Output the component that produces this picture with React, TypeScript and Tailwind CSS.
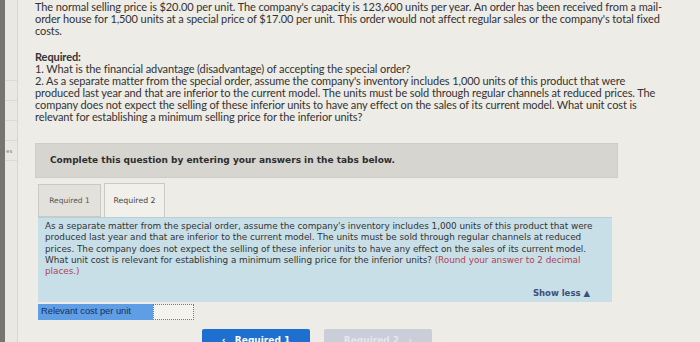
import React from 'react';

const topLines = [
  "The normal selling price is $20.00 per unit. The company's capacity is 123,600 units per year. An order has been received from a mail-",
  "order house for 1,500 units at a special price of $17.00 per unit. This order would not affect regular sales or the company's total fixed",
  "costs.",
];

const reqLines = [
  "1. What is the financial advantage (disadvantage) of accepting the special order?",
  "2. As a separate matter from the special order, assume the company's inventory includes 1,000 units of this product that were",
  "produced last year and that are inferior to the current model. The units must be sold through regular channels at reduced prices. The",
  "company does not expect the selling of these inferior units to have any effect on the sales of its current model. What unit cost is",
  "relevant for establishing a minimum selling price for the inferior units?",
];

const Sidebar = () => (
  <div className="flex w-[18px] shrink-0 h-full">
    <div className="w-[5px] bg-[#77756f]" />
    <div className="flex-1 bg-[#e9e8e2] border-r border-[#d8d6cf] pt-[80px]">
      <div className="h-[20px] border-t border-[#dcdad3]" />
      <div className="h-[20px] border-t border-[#dcdad3]" />
      <div className="h-[20px] border-t border-[#dcdad3]" />
      <div className="h-[20px] border-t border-[#dcdad3] text-[6px] text-[#8a8883] leading-[20px] pl-[1px]">es</div>
      <div className="border-t border-[#dcdad3]" />
    </div>
  </div>
);

export default function App() {
  return (
    <div className="w-[700px] h-[342px] overflow-hidden flex bg-[#edece6]">
      <Sidebar />
      <div className="flex-1 pl-[17px] pt-[1px] text-[#333]">
        <div className="text-[11px] leading-[12px] tracking-[-0.1px]" style={{ fontFamily: 'Lato, "Open Sans", sans-serif' }}>
          {topLines.map((l) => (
            <div key={l} className="whitespace-nowrap">{l}</div>
          ))}
          <div className="h-[14px]" />
          <div className="font-bold">Required:</div>
          {reqLines.map((l) => (
            <div key={l} className="whitespace-nowrap">{l}</div>
          ))}
        </div>

        <div
          className="mt-[20px] w-[583px] h-[35px] bg-[#d7d5d0] border border-[#cfcdc7] flex items-center pl-[14px]"
          style={{ fontFamily: '"DejaVu Sans", Verdana, sans-serif' }}
        >
          <span className="text-[9px] font-bold text-[#2e2e2e]">
            Complete this question by entering your answers in the tabs below.
          </span>
        </div>

        <div className="ml-[3px] mt-[6px] w-[574px]" style={{ fontFamily: '"DejaVu Sans", Verdana, sans-serif' }}>
          <div className="flex gap-[3px] h-[33px] items-end">
            <div className="w-[63px] h-[33px] bg-[#e3e1dc] border border-[#cbc9c3] flex items-center justify-center text-[7.5px] text-[#555]">
              Required 1
            </div>
            <div className="w-[61px] h-[34px] bg-[#f1f0eb] border border-b-0 border-[#cbc9c3] flex items-center justify-center text-[7.8px] text-[#444]">
              Required 2
            </div>
          </div>
          <div className="bg-[#c8dfe7] border-t border-[#b9cfd8] px-[7px] pt-[3px] pb-[2px] h-[85px] flex flex-col">
            <div className="text-[8.9px] leading-[11.3px] text-[#333] tracking-[-0.05px]">
              <div className="whitespace-nowrap">As a separate matter from the special order, assume the company's inventory includes 1,000 units of this product that were</div>
              <div className="whitespace-nowrap">produced last year and that are inferior to the current model. The units must be sold through regular channels at reduced</div>
              <div className="whitespace-nowrap">prices. The company does not expect the selling of these inferior units to have any effect on the sales of its current model.</div>
              <div className="whitespace-nowrap">
                What unit cost is relevant for establishing a minimum selling price for the inferior units?{' '}
                <span className="text-[#b04358]">(Round your answer to 2 decimal</span>
              </div>
              <div className="whitespace-nowrap text-[#b04358]">places.)</div>
            </div>
            <div className="mt-auto flex justify-end pr-[15px]">
              <span className="text-[8.5px] font-bold text-[#3a4f7a]">Show less ▲</span>
            </div>
          </div>

          <div className="mt-[2px] flex h-[16px]">
            <div className="w-[115px] bg-[#5f9de4] flex items-center pl-[3px] text-[9.3px] text-[#14315e]" style={{ fontFamily: '"Liberation Sans", Arial, sans-serif' }}>
              Relevant cost per unit
            </div>
            <div className="w-[41px] bg-[#f4f3ee] border border-dotted border-[#777]" />
          </div>

          <div className="mt-[9px] flex gap-[14px] pl-[164px]">
            <div className="w-[108px] h-[20px] bg-[#1f6fd1] rounded-[2px] flex items-start justify-center pt-[5px] text-[9px] font-bold text-white">
              ‹&nbsp;&nbsp;&nbsp;Required 1
            </div>
            <div className="w-[108px] h-[20px] bg-[#c9ced8] rounded-[2px] flex items-start justify-center pt-[5px] text-[9px] font-bold text-[#e4e7ee]">
              Required 2&nbsp;&nbsp;&nbsp;›
            </div>
          </div>
        </div>
      </div>
    </div>
  );
}
